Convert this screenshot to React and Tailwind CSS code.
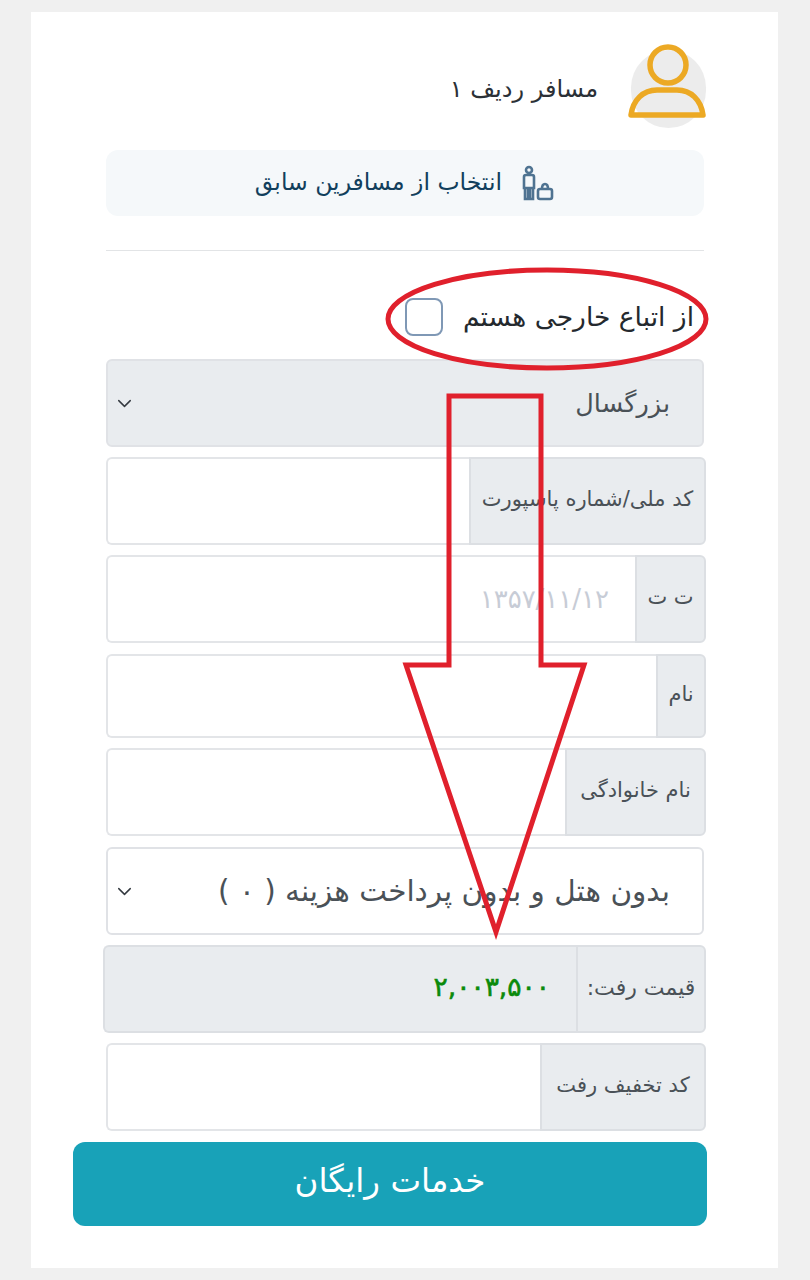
import { ChevronDown } from "lucide-react";

const InputGroup = ({ label, labelWidth, className = "h-[88px]", children }) => (
  <div className={`flex ${className}`}>
    <div
      className={`${labelWidth} flex items-center justify-center shrink-0 pb-[3px] bg-[#e9ecef] border-2 border-[#dcdfe3] rounded-r-md text-[21px] text-[#4a5157]`}
    >
      {label}
    </div>
    <div className="flex-1 flex items-center bg-white border-2 border-r-0 border-[#e3e5e8] rounded-l-md">
      {children}
    </div>
  </div>
);

const SelectBox = ({ value, className }) => (
  <div
    className={`w-[598px] h-[88px] flex items-center justify-between pr-[32px] pl-[5px] border-2 border-[#e0e2e6] rounded-md text-[#4a5157] ${className}`}
  >
    <span>{value}</span>
    <ChevronDown size={23} strokeWidth={1.5} className="text-[#343a40]" />
  </div>
);

export default function App() {
  return (
    <div
      dir="rtl"
      className="relative h-[1280px] overflow-hidden bg-[#f0f0f0] pt-[12px] pr-[32px] pl-[31px] font-['DejaVu_Sans',sans-serif]"
    >
      <div className="h-[1256px] bg-white pr-[72px] pl-[75px] pt-[38px] flex flex-col">
        {/* سرتیتر مسافر */}
        <div className="flex items-center gap-[33px] h-[78px]">
          <div className="w-[75px] h-[78px] rounded-full bg-[#ececec] shrink-0">
            <svg width="75" height="78" viewBox="0 0 75 78" fill="none" stroke="#eca924" strokeWidth="5.5" className="overflow-visible">
              <circle cx="37" cy="15" r="18" />
              <path d="M0 65 C2 50 12 40 26 40 H46 C60 40 70 50 72 65 Z" strokeLinejoin="round" />
            </svg>
          </div>
          <span className="text-[24px] text-[#2b3036]">مسافر ردیف ۱</span>
        </div>

        <div className="mt-[22px] mr-[2px] w-[598px] h-[66px] bg-[#f5f8fa] rounded-xl flex items-center gap-[20px] pr-[149px] text-[23.5px] text-[#123f5c]">
          <svg width="34" height="36" viewBox="0 0 34 36" fill="none" stroke="#4f7391" strokeWidth="2.6" className="shrink-0 -ml-[1px]">
            <circle cx="8" cy="5" r="3" />
            <path d="M3 12 Q3 10 5 10 H11 Q13 10 13 12 V23 H3 Z" />
            <path d="M4 24 V34 H7 V24 M9 24 V34 H12 V24" />
            <rect x="17" y="24" width="14" height="10" rx="2" />
            <path d="M21 24 Q21 19 24 19 Q27 19 27 24" />
          </svg>
          <span>انتخاب از مسافرین سابق</span>
        </div>

        <div className="mt-[34px] mr-[2px] w-[598px] h-px bg-[#e2e4e6]" />

        <label className="mt-[47px] mr-[12px] flex items-center gap-[20px] h-[38px] text-[26.5px] text-[#24292e]">
          <span>از اتباع خارجی هستم</span>
          <span className="w-[38px] h-[38px] rounded-lg border-2 border-[#7f98b5] bg-white" />
        </label>

        <SelectBox value="بزرگسال" className="mt-[23px] mr-[2px] bg-[#e9ecef] text-[25.5px]" />

        <div className="mt-[10px] flex flex-col gap-[10px]">
          <InputGroup label="کد ملی/شماره پاسپورت" labelWidth="w-[237px]" />
          <InputGroup label="ت ت" labelWidth="w-[71px]">
            <span dir="ltr" className="mr-[26px] text-[26px] text-[#c7ccd6]">۱۳۵۷/۱۱/۱۲</span>
          </InputGroup>
          <InputGroup label="نام" labelWidth="w-[50px]" className="h-[84px] mt-px" />
          <InputGroup label="نام خانوادگی" labelWidth="w-[141px]" />
          <SelectBox value="بدون هتل و بدون پرداخت هزینه ( ۰ )" className="mt-px mr-[2px] bg-white text-[29.5px]" />
          <div className="flex h-[88px] w-[603px]">
            <div className="w-[130px] shrink-0 flex items-center justify-center pb-[4px] bg-[#e9ecef] border-2 border-[#dcdfe3] rounded-r-md text-[22px] text-[#4a5157]">
              قیمت رفت:
            </div>
            <div className="flex-1 flex items-center bg-[#e9ecef] border-2 border-r-0 border-[#dcdfe3] rounded-l-md pr-[26px] pb-[4px] text-[26.5px] text-[#0a8a0a] [-webkit-text-stroke:0.6px_#0a8a0a]">
              ۲,۰۰۳,۵۰۰
            </div>
          </div>
          <InputGroup label="کد تخفیف رفت" labelWidth="w-[166px]" />
        </div>

        <button className="mt-[11px] -mr-[1px] w-[634px] h-[84px] pb-[5px] rounded-xl bg-[#18a2b8] text-white text-[32.5px]">
          خدمات رایگان
        </button>
      </div>

      {/* حاشیه نویسی قرمز روی تصویر */}
      <svg className="absolute inset-0 pointer-events-none" width="810" height="1280" viewBox="0 0 810 1280" fill="none" stroke="#e0202c" strokeWidth="5">
        <ellipse cx="547" cy="319" rx="159" ry="49" />
        <path d="M449 396 H541 V665 H584 L496 932 L406 665 H449 Z" strokeLinejoin="miter" />
      </svg>
    </div>
  );
}
